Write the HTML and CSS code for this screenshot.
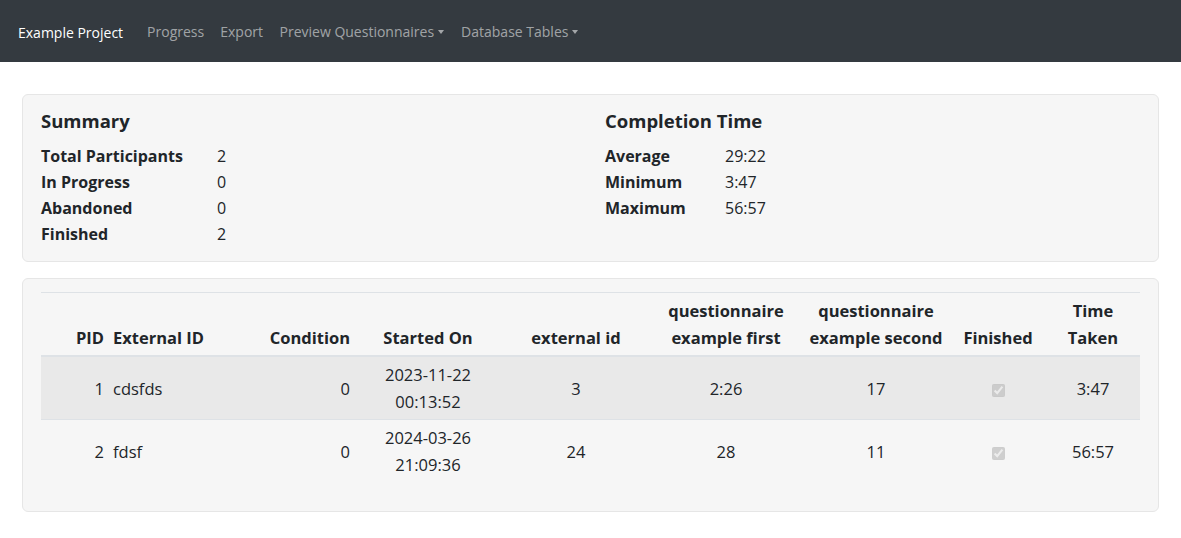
FILE: index.html
```html
<!DOCTYPE html>
<html lang="en">
<head>
<meta charset="utf-8">
<title>Example Project</title>
<link rel="stylesheet" href="styles.css">
</head>
<body>
<nav class="navbar">
  <a class="brand" href="#">Example Project</a>
  <ul class="nav">
    <li><a href="#">Progress</a></li>
    <li><a href="#">Export</a></li>
    <li><a href="#" class="toggle">Preview Questionnaires</a></li>
    <li><a href="#" class="toggle">Database Tables</a></li>
  </ul>
</nav>
<main class="main">
  <section class="card summary">
    <div class="col">
      <h5 class="title">Summary</h5>
      <dl class="stats stats-left">
        <dt>Total Participants</dt><dd>2</dd>
        <dt>In Progress</dt><dd>0</dd>
        <dt>Abandoned</dt><dd>0</dd>
        <dt>Finished</dt><dd>2</dd>
      </dl>
    </div>
    <div class="col">
      <h5 class="title">Completion Time</h5>
      <dl class="stats stats-right">
        <dt>Average</dt><dd>29:22</dd>
        <dt>Minimum</dt><dd>3:47</dd>
        <dt>Maximum</dt><dd>56:57</dd>
      </dl>
    </div>
  </section>
  <section class="card table-card">
    <table class="table">
      <colgroup>
        <col class="c-pid"><col class="c-ext"><col class="c-cond"><col class="c-start"><col class="c-eid"><col class="c-q1"><col class="c-q2"><col class="c-fin"><col class="c-time">
      </colgroup>
      <thead>
        <tr>
          <th class="r">PID</th>
          <th class="l">External ID</th>
          <th class="r">Condition</th>
          <th>Started On</th>
          <th>external id</th>
          <th>questionnaire<br>example first</th>
          <th>questionnaire<br>example second</th>
          <th>Finished</th>
          <th>Time<br>Taken</th>
        </tr>
      </thead>
      <tbody>
        <tr class="striped">
          <td class="r">1</td>
          <td class="l">cdsfds</td>
          <td class="r">0</td>
          <td>2023-11-22<br>00:13:52</td>
          <td>3</td>
          <td>2:26</td>
          <td>17</td>
          <td><input type="checkbox" class="check" checked disabled></td>
          <td>3:47</td>
        </tr>
        <tr>
          <td class="r">2</td>
          <td class="l">fdsf</td>
          <td class="r">0</td>
          <td>2024-03-26<br>21:09:36</td>
          <td>24</td>
          <td>28</td>
          <td>11</td>
          <td><input type="checkbox" class="check" checked disabled></td>
          <td>56:57</td>
        </tr>
      </tbody>
    </table>
  </section>
</main>
</body>
</html>
```
FILE: styles.css
```css
* { box-sizing: border-box; }
html, body { margin: 0; padding: 0; }
body {
  font-family: "Open Sans", "Noto Sans", sans-serif;
  font-size: 16px;
  line-height: 1.5;
  color: #212529;
  background: #fff;
}
a { text-decoration: none; }

.navbar {
  height: 62px;
  background: #343a40;
  display: flex;
  align-items: center;
  padding: 0 18px;
}
.brand {
  color: #fff;
  font-size: 14px;
  margin-right: 16px;
  padding-top: 3px;
}
.nav {
  display: flex;
  list-style: none;
  margin: 0;
  padding: 0;
}
.nav a {
  display: block;
  color: rgba(255,255,255,.55);
  font-size: 14px;
  padding: 0 8px;
}
.nav li:nth-child(n+3) a { padding: 0 8.5px; }
.toggle::after {
  content: "";
  display: inline-block;
  margin-left: 4px;
  vertical-align: 3px;
  border-top: 4.5px solid;
  border-left: 3.5px solid transparent;
  border-right: 3.5px solid transparent;
}

.main {
  padding: 32px 22px 0;
}
.card {
  background: #f6f6f6;
  border: 1px solid #e6e6e6;
  border-radius: 6px;
}
.summary {
  display: grid;
  grid-template-columns: 564px 1fr;
  padding: 14px 18px 14px;
  margin-bottom: 16px;
}
.title {
  margin: 0 0 10px;
  font-size: 18.5px;
  font-weight: 700;
  line-height: 24px;
}
.stats {
  display: grid;
  margin: 0;
  line-height: 26px;
}
.stats-left { grid-template-columns: 176px 1fr; }
.stats-right { grid-template-columns: 120px 1fr; }
.stats dt { font-weight: 700; }
.stats dd { margin: 0; }

.table-card {
  padding: 13px 18px;
}
.table {
  width: 100%;
  table-layout: fixed;
  border-collapse: collapse;
  margin-bottom: 16px;
  font-size: 16.5px;
  line-height: 27px;
}
.c-pid { width: 67px; }
.c-ext { width: 114px; }
.c-cond { width: 132px; }
.c-start { width: 148px; }
.c-eid { width: 148px; }
.c-q1 { width: 152px; }
.c-q2 { width: 148px; }
.c-fin { width: 96px; }
.c-time { width: 94px; }
.table th, .table td {
  padding: 4px 5px;
  text-align: center;
  vertical-align: middle;
  border-top: 1px solid #dee2e6;
}
.table th {
  vertical-align: bottom;
  font-weight: 700;
  border-bottom: 2px solid #dee2e6;
}
.table thead + tbody tr:first-child td { border-top: 0; }
.table .r { text-align: right; }
.table .l { text-align: left; }
.table th.r { padding-right: 4px; }
.table td.r { padding-right: 4px; }
.striped { background: #e9e9e9; }
.check {
  margin: 0;
  width: 13px;
  height: 13px;
  vertical-align: middle;
}
```
